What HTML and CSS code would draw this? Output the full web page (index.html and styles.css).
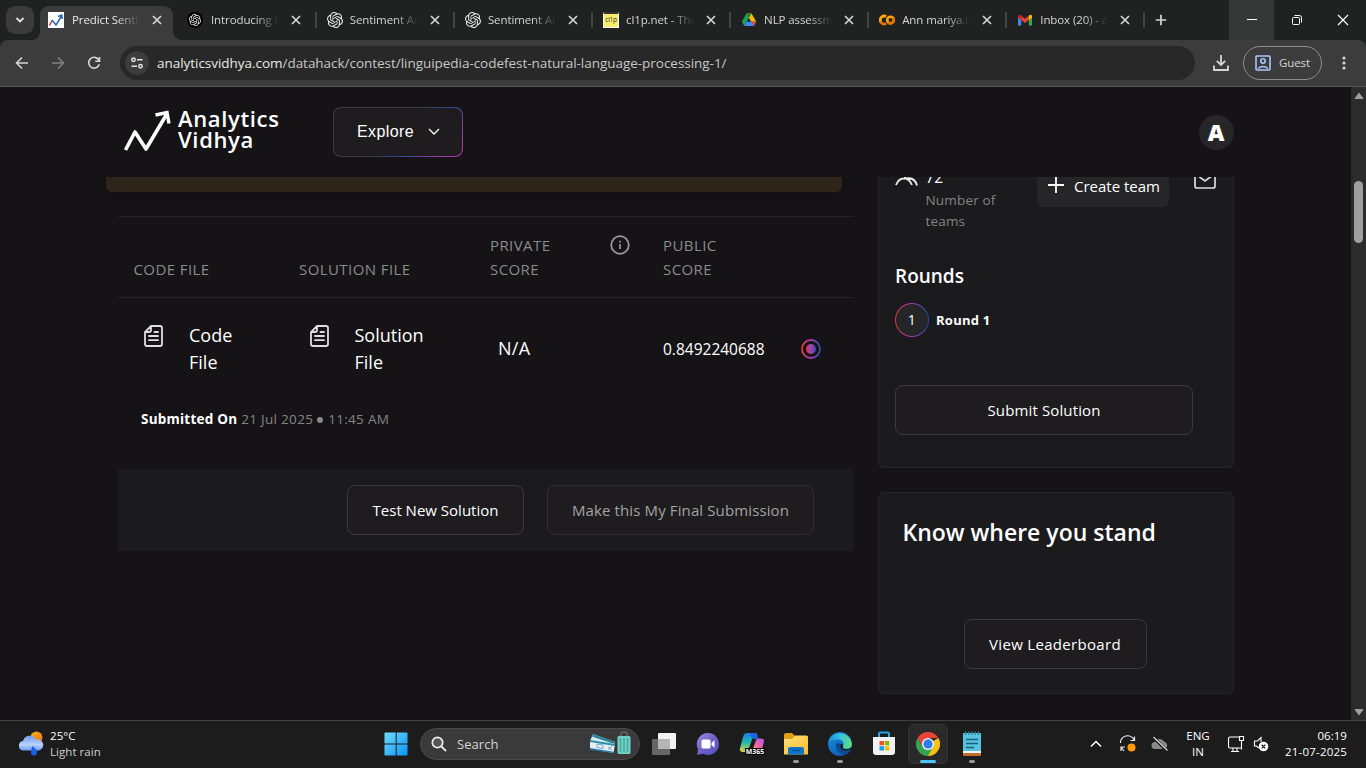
FILE: index.html
```html
<!DOCTYPE html>
<html lang="en">
<head>
<meta charset="utf-8">
<title>Predict Sentiment</title>
<link rel="stylesheet" href="styles.css">
</head>
<body>
<svg class="defs" width="0" height="0">
  <defs>
    <linearGradient id="rb" x1="0" x2="1"><stop offset="0" stop-color="#e23b3b"/><stop offset=".5" stop-color="#a33fb5"/><stop offset="1" stop-color="#2b50a8"/></linearGradient>
    <linearGradient id="win" x1="0" y1="0" x2="1" y2="1"><stop offset="0" stop-color="#6fdcff"/><stop offset="1" stop-color="#0a94f5"/></linearGradient>
    <linearGradient id="cloud" x1="0" y1="0" x2="0" y2="1"><stop offset="0" stop-color="#6f9df0"/><stop offset=".6" stop-color="#b9d2fb"/><stop offset="1" stop-color="#6d9cf2"/></linearGradient>
    <linearGradient id="sun" x1="0" y1="0" x2="1" y2="1"><stop offset="0" stop-color="#fbb615"/><stop offset="1" stop-color="#f26a1b"/></linearGradient>
    <linearGradient id="teams" x1="0" y1="0" x2="1" y2="1"><stop offset="0" stop-color="#a58ae0"/><stop offset=".5" stop-color="#7160c8"/><stop offset="1" stop-color="#4a50c0"/></linearGradient>
    <linearGradient id="cop1" x1="0" y1="0" x2="0" y2="1"><stop offset="0" stop-color="#1b7fe8"/><stop offset=".5" stop-color="#20b8b0"/><stop offset="1" stop-color="#e8d13a"/></linearGradient>
    <linearGradient id="cop2" x1="1" y1="0" x2="0" y2="1"><stop offset="0" stop-color="#a05af0"/><stop offset=".6" stop-color="#f060a8"/><stop offset="1" stop-color="#fba04a"/></linearGradient>
    <linearGradient id="fold" x1="0" y1="0" x2="1" y2="1"><stop offset="0" stop-color="#ffe07a"/><stop offset="1" stop-color="#fbbc2c"/></linearGradient>
    <linearGradient id="edge1" x1="0" y1="0" x2="1" y2="0"><stop offset="0" stop-color="#1c8fd8"/><stop offset=".5" stop-color="#35c1e0"/><stop offset="1" stop-color="#64e070"/></linearGradient>
    <linearGradient id="edge2" x1="0" y1="0" x2="1" y2="1"><stop offset="0" stop-color="#1a8fe0"/><stop offset="1" stop-color="#0b4fa5"/></linearGradient>
    <symbol id="x" viewBox="0 0 12 12"><path d="M2 2l8 8M10 2l-8 8" stroke="#d6d6d6" stroke-width="1.7" fill="none"/></symbol>
    <symbol id="gpt" viewBox="0 0 24 24"><path fill="currentColor" d="M22.28 9.82a5.98 5.98 0 0 0-.52-4.91 6.05 6.05 0 0 0-6.51-2.9A6.07 6.07 0 0 0 4.98 4.18a5.98 5.98 0 0 0-4 2.9 6.05 6.05 0 0 0 .74 7.1 5.98 5.98 0 0 0 .51 4.91 6.05 6.05 0 0 0 6.52 2.9A5.98 5.98 0 0 0 13.26 24a6.06 6.06 0 0 0 5.77-4.21 5.99 5.99 0 0 0 4-2.9 6.06 6.06 0 0 0-.75-7.07zm-9.02 12.61a4.48 4.48 0 0 1-2.88-1.04l.14-.08 4.78-2.76a.8.8 0 0 0 .39-.68v-6.74l2.02 1.17a.07.07 0 0 1 .04.05v5.58a4.5 4.5 0 0 1-4.49 4.5zM3.6 18.3a4.47 4.47 0 0 1-.54-3.01l.14.08 4.78 2.76a.77.77 0 0 0 .78 0l5.85-3.37v2.33a.08.08 0 0 1-.04.06L9.74 19.95a4.5 4.5 0 0 1-6.14-1.65zM2.34 7.9a4.49 4.49 0 0 1 2.37-1.98v5.68a.77.77 0 0 0 .39.68l5.81 3.35-2.02 1.17a.08.08 0 0 1-.07 0L4 14.01A4.5 4.5 0 0 1 2.34 7.9zm16.6 3.86l-5.84-3.4L15.12 7.2a.08.08 0 0 1 .07 0l4.83 2.79a4.49 4.49 0 0 1-.68 8.1v-5.67a.79.79 0 0 0-.4-.66zm2.01-3.03l-.14-.08-4.78-2.78a.78.78 0 0 0-.78 0L9.41 9.24V6.9a.07.07 0 0 1 .03-.06l4.83-2.79a4.5 4.5 0 0 1 6.68 4.66zM8.3 12.86l-2.02-1.17a.08.08 0 0 1-.04-.05V6.07a4.5 4.5 0 0 1 7.38-3.45l-.14.08-4.78 2.76a.8.8 0 0 0-.39.68zm1.1-2.36l2.6-1.5 2.61 1.5v3l-2.6 1.5-2.61-1.5z"/></symbol>
    <symbol id="doc" viewBox="0 0 20 24"><path d="M8 2h9q2 0 2 2v16q0 2-2 2H4q-2 0-2-2V8zM8 2v4q0 2-2 2H2M6 16.200h9M6 12h9M11.500 8H15" fill="none" stroke="#dededf" stroke-width="1.800" stroke-linecap="round"/></symbol>
  </defs>
</svg>

<div class="tabstrip">
  <div class="tab-search"><svg width="12" height="12" viewBox="0 0 12 12"><path d="M2.500 4l3.500 3.500L9.500 4" fill="none" stroke="#e3e3e3" stroke-width="1.800"/></svg></div>
  <div class="tab active">
    <svg class="fav" viewBox="0 0 16 16"><path fill="#fff" d="M0 0h16v16H0z"/><path d="M1.500 13.500l2.700-5" fill="none" stroke="#d0324a" stroke-width="1.500"/><path d="M4 8l4 5 5.500-9M10 4.500l3.800-1.500.4 4" fill="none" stroke="#2464b4" stroke-width="1.500"/></svg>
    <span class="title on">Predict Sentiment</span><svg class="close"><use href="#x"/></svg>
  </div>
  <div class="tab second">
    <span class="fav black"><svg width="12" height="12"><use href="#gpt"/></svg></span>
    <span class="title">Introducing ChatGPT</span><svg class="close"><use href="#x"/></svg>
  </div>
  <div class="tab"><svg class="fav light"><use href="#gpt"/></svg><span class="title">Sentiment Analysis</span><svg class="close"><use href="#x"/></svg></div>
  <div class="tab"><svg class="fav light"><use href="#gpt"/></svg><span class="title">Sentiment Analysis</span><svg class="close"><use href="#x"/></svg></div>
  <div class="tab"><span class="fav clip">cl1p</span><span class="title">cl1p.net - The internet</span><svg class="close"><use href="#x"/></svg></div>
  <div class="tab"><svg class="fav" viewBox="0 0 16 16"><path fill="#1aa05a" d="M5.500 1.500L.8 9.700l2.500 4.200L8 5.800z"/><path fill="#fbbc04" d="M5.500 1.500h5l4.700 8.200h-5z"/><path fill="#4285f4" d="M5.500 9.700h9.700l-2.500 4.200H3.300z"/><path fill="#ea4335" d="M10.600 9.700h4.600l-2.500 4.200z"/><path fill="#188038" d="M5.500 1.500h5L8 5.800z"/></svg><span class="title">NLP assessment</span><svg class="close"><use href="#x"/></svg></div>
  <div class="tab"><svg class="fav" viewBox="0 0 16 16"><g fill="none" stroke-width="2.600"><path stroke="#e8710a" d="M7.300 4.600a4 4 0 1 0 0 6.800"/><path stroke="#f9ab00" d="M6.800 4.200a4 4 0 0 0-5.200 5.200"/><circle cx="11.500" cy="8" r="3.300" stroke="#f9ab00"/><path stroke="#e8710a" d="M9.200 10.400a3.300 3.300 0 0 0 4.600-4.700"/></g></svg><span class="title">Ann mariya.ipynb</span><svg class="close"><use href="#x"/></svg></div>
  <div class="tab"><svg class="fav" viewBox="0 0 16 16"><path fill="#4285f4" d="M1 5v8.500h3.200V7z"/><path fill="#34a853" d="M15 5v8.500h-3.200V7z"/><path fill="#ea4335" d="M4.200 3.800L8 6.700l3.800-2.900v4.300L8 11 4.200 8.100z"/><path fill="#c5221f" d="M1 4.500C1 2.500 3 2.400 4.200 3.500v4.600L1 5.700z"/><path fill="#fbbc04" d="M15 4.500c0-2-2-2.100-3.200-1v4.600L15 5.700z"/></svg><span class="title">Inbox (20) - ann</span><svg class="close"><use href="#x"/></svg></div>
  <svg class="plus" width="12" height="12" viewBox="0 0 12 12"><path d="M6 .8v10.400M.8 6h10.400" stroke="#d6d6d6" stroke-width="1.700"/></svg>
  <div class="winbtns">
    <span class="wb hot"><svg width="12" height="12"><path d="M1 5.500h10" stroke="#fff"/></svg></span>
    <span class="wb"><svg width="12" height="12"><path d="M3.500 1.500h5q2 0 2 2v5" fill="none" stroke="#fff"/><rect x="1.500" y="3.500" width="7" height="7" rx="1" fill="none" stroke="#fff"/></svg></span>
    <span class="wb"><svg width="12" height="12"><path d="M1 1l10 10M11 1L1 11" stroke="#fff" stroke-width="1.200"/></svg></span>
  </div>
</div>

<div class="toolbar">
  <svg class="nav" viewBox="0 0 16 16"><path d="M14 8H3M8 2.500L2.500 8 8 13.500" fill="none" stroke="#d6d6d6" stroke-width="1.600"/></svg>
  <svg class="nav" viewBox="0 0 16 16"><path d="M2 8h11M8 2.500L13.500 8 8 13.500" fill="none" stroke="#828282" stroke-width="1.600"/></svg>
  <svg class="nav" viewBox="0 0 16 16"><path d="M12.800 5A5.400 5.400 0 1 0 13.300 9.200M13.500 2v4.300H9.200" fill="none" stroke="#d6d6d6" stroke-width="1.600"/></svg>
  <div class="omnibox">
    <span class="site"><svg width="14" height="14" viewBox="0 0 14 14" fill="none" stroke="#e3e3e3" stroke-width="1.500"><circle cx="3.500" cy="3.800" r="1.700"/><path d="M7 3.800h5.500M1.500 10.200H7"/><circle cx="10.500" cy="10.200" r="1.700"/></svg></span>
    <span class="url"><b>analyticsvidhya.com</b>/datahack/contest/linguipedia-codefest-natural-language-processing-1/</span>
  </div>
  <svg class="dl" width="18" height="18" viewBox="0 0 18 18"><path d="M9 1v9.500M4.800 6.800L9 11l4.200-4.200M2 11.500V16h14v-4.500" fill="none" stroke="#d6d6d6" stroke-width="1.800"/></svg>
  <div class="guest"><svg width="16" height="16" viewBox="0 0 16 16" fill="none" stroke="#a8c7fa" stroke-width="1.600"><rect x="1" y="1" width="14" height="14" rx="1"/><circle cx="8" cy="6" r="2.200"/><path d="M3 13.500q5-4 10 0"/></svg><span>Guest</span></div>
  <svg class="kebab" width="4" height="16"><g fill="#d6d6d6"><circle cx="2" cy="3" r="1.600"/><circle cx="2" cy="8" r="1.600"/><circle cx="2" cy="13" r="1.600"/></g></svg>
</div>

<div class="viewport">
  <div class="page">
    <header class="site-header">
      <svg class="arrow" width="50" height="44" viewBox="0 0 50 44"><path d="M3.500 40L13 22 24 39 44.500 4.500" fill="none" stroke="#fff" stroke-width="3.600" stroke-linejoin="round"/><path d="M33.500 5L45 2.500 47 13.500" fill="none" stroke="#fff" stroke-width="3.400"/></svg>
      <div class="brand"><div>Analytics</div><div>Vidhya</div></div>
      <div class="explore"><span>Explore</span><svg width="12" height="8" viewBox="0 0 12 8"><path d="M1 1l5 5 5-5" fill="none" stroke="#fff" stroke-width="1.300"/></svg></div>
      <div class="avatar">A</div>
    </header>
    <main class="content">
      <section class="left">
        <div class="banner"></div>
        <div class="table">
          <div class="row head">
            <div>CODE FILE</div>
            <div>SOLUTION FILE</div>
            <div>PRIVATE<br>SCORE</div>
            <div class="info"><svg width="20" height="20" viewBox="0 0 20 20"><circle cx="10" cy="10" r="8.800" fill="none" stroke="#98979a" stroke-width="1.800"/><path d="M10 9v5M10 5.800v1.700" stroke="#98979a" stroke-width="1.700"/></svg></div>
            <div>PUBLIC<br>SCORE</div>
          </div>
          <div class="row files">
            <div class="file"><svg width="20" height="24"><use href="#doc"/></svg><p>Code<br>File</p></div>
            <div class="file"><svg width="20" height="24"><use href="#doc"/></svg><p>Solution<br>File</p></div>
            <div class="na">N/A</div>
            <div class="score">0.8492240688</div>
            <div class="radio"><svg width="20" height="20"><circle cx="10" cy="10" r="9" fill="none" stroke="url(#rb)" stroke-width="1.800"/><circle cx="10" cy="10" r="5" fill="url(#rb)"/></svg></div>
          </div>
          <div class="submitted"><b>Submitted On</b><span>21 Jul 2025</span><i></i><span>11:45 AM</span></div>
        </div>
        <div class="actions">
          <div class="btn test">Test New Solution</div>
          <div class="btn final">Make this My Final Submission</div>
        </div>
      </section>
      <aside class="side">
        <div class="card first">
          <div class="teamline">
            <svg class="people" width="25" height="18" viewBox="0 0 25 18" fill="none" stroke="#eee" stroke-width="1.800"><path d="M2 17Q4.500 10.500 10 10.500T18 17M13 10.500Q20.500 9 23 17.500M10 9.500q4 1 6 3"/><circle cx="9" cy="4" r="3.500"/><path d="M14 1a3.500 3.500 0 0 1 0 7"/></svg>
            <div class="count"><p class="num">72</p><p class="lab">Number of<br>teams</p></div>
            <div class="create"><svg width="18" height="18"><path d="M9 1v16M1 9h16" stroke="#fff" stroke-width="1.800"/></svg><span>Create team</span></div>
            <svg class="mail" width="24" height="20" viewBox="0 0 24 20"><rect x="2" y="1" width="20" height="17" rx="2" fill="none" stroke="#dedede" stroke-width="1.700"/><path d="M6 6.500l6 4.500 6-4.500" fill="none" stroke="#dedede" stroke-width="1.600"/></svg>
          </div>
          <h3>Rounds</h3>
          <div class="round"><div class="ball">1</div><b>Round 1</b></div>
          <div class="btn submit">Submit Solution</div>
        </div>
        <div class="card second-card">
          <h2>Know where you stand</h2>
          <div class="foot"><div class="btn view">View Leaderboard</div></div>
        </div>
      </aside>
    </main>
  </div>
  <div class="scroll"><svg width="10" height="8"><path d="M5 .5L9.500 6.500Q9 7 8 7H2Q1 7 .5 6.500z" fill="#9f9f9f"/></svg><div class="thumb"></div><svg class="down" width="10" height="8"><path d="M5 7.500L.5 1.500Q1 1 2 1h6q1 0 1.500.5z" fill="#9f9f9f"/></svg></div>
</div>

<footer class="taskbar">
  <div class="weather">
    <svg width="26" height="26" viewBox="0 0 26 26"><circle cx="18.500" cy="6.500" r="6" fill="url(#sun)"/><path d="M5 19.500a4.800 4.800 0 0 1 0-9.500 7 7 0 0 1 13-1.500 5.500 5.500 0 0 1 3 11z" fill="url(#cloud)"/><path d="M14 15q5 3 5 6.500a3 3 0 0 1-6 0z" fill="#1c5fe0"/></svg>
    <div class="wtext"><span class="hi">25°C</span><br>Light rain</div>
  </div>
  <div class="apps">
    <svg class="start" width="24" height="24" viewBox="0 0 24 24"><path fill="url(#win)" d="M1 .5h10.700v11H.5V1zM12.700.5H23l.5.500v10.500H12.700zM.5 12.500h11.200v11H1l-.5-.5zM12.700 12.500h10.800V23l-.5.5H12.700z"/></svg>
    <div class="search"><svg width="16" height="16" viewBox="0 0 16 16"><circle cx="6.500" cy="6.500" r="5.200" fill="#555" stroke="#eee" stroke-width="1.700"/><path d="M10.300 10.300l4.700 4.700" stroke="#eee" stroke-width="1.800"/></svg><span>Search</span>
      <svg class="travel" width="44" height="26" viewBox="0 0 44 26"><path d="M4 3l22 8-2 7L1 10z" fill="#d5e9ef"/><path d="M4 3l22 8-.7 2L3 5.500z" fill="#26849c"/><path d="M1 9l25 4-1.500 9L1 18z" fill="#e9eef4"/><path d="M1 9l25 4-.3 2L1 11z" fill="#2b8fa6"/><path d="M1 17l23.800 3.700-.3 1.600L1 18.500z" fill="#267cb0"/><path d="M8 13v3.500l6 1v-3.500zM19 16l4 3M23 15.500l-4 3" stroke="#6aaac8" fill="none"/><path d="M32 5V2.500q0-1.500 3-1.500t3 1.500V5" fill="none" stroke="#5a6d78" stroke-width="1.500"/><rect x="28.500" y="5" width="13" height="18" rx="1.500" fill="#72cfc4"/><path d="M31.500 7v14M35 7v14M38.500 7v14" stroke="#3ba398" stroke-width="1.200"/></svg>
    </div>
    <div class="app"><svg width="24" height="24" viewBox="0 0 24 24"><rect x="6" y="1" width="18" height="16" rx="1" fill="#f2f2f2"/><rect y="7" width="18" height="16" rx="1" fill="#666"/><path d="M6 7h12v10H6z" fill="#b5b5b5"/></svg></div>
    <div class="app"><svg width="24" height="24" viewBox="0 0 24 24"><path d="M12 1a11 11 0 1 1-5 20.800L1 23l1-6A11 11 0 0 1 12 1z" fill="url(#teams)"/><rect x="5.500" y="7.500" width="9" height="9" rx="1.500" fill="#fff"/><path d="M15.500 11l3-2.800v7.600l-3-2.800z" fill="#fff"/></svg></div>
    <div class="app"><svg width="26" height="26" viewBox="0 0 26 26"><path d="M8 2h8q2 0 2.500 3l-3 1q-2 0-3 4l-3 8q-1 3-4 3H4q-4 0-3-4L4 6q1-4 4-4z" fill="url(#cop1)"/><path d="M8 2h8q2 0 2.500 3l1 3h-4q-3 0-5-6z" fill="#1a65d8"/><path d="M15 15l2-6q.8-1.500 3-1.500h2q4 0 2.800 4L23 18h-9z" fill="url(#cop2)"/><path d="M6 17h20v7H6z" fill="#050505"/><text x="6.700" y="23.300" class="m365" textLength="18.500" lengthAdjust="spacingAndGlyphs">M365</text></svg></div>
    <div class="app run"><svg width="26" height="24" viewBox="0 0 26 24"><path d="M1 3q0-2 2-2h6l3 3v4H1z" fill="#e0a010"/><path d="M1 7h8l3-3.500h11.500Q25 3.500 25 5v17.500H1z" fill="url(#fold)"/><path d="M5 22.500V17q0-2 2-2h12q2 0 2 2v5.500z" fill="#1274c8"/><path d="M9 18.500h8" stroke="#064f98" stroke-width="1.400"/></svg></div>
    <div class="app run"><svg width="26" height="26" viewBox="0 0 26 26"><circle cx="13" cy="13" r="12" fill="url(#edge2)"/><path d="M1.500 11A12 12 0 0 1 25 13q0 5-6 5-4 0-3-2.500 2-6-4-7-6-.5-10.500 2.500z" fill="url(#edge1)"/><path d="M9 13q-1 8 8 11 4-1 6.500-5-6 2.500-9.500-1-2-2.500-.5-5-3-2-4.500 0z" fill="#0b4a94"/><path d="M13.500 13q-1.500 4.500 3 6.500 4 1 7.500-1.500l1-2q-2 2-6 2-4 0-3-2.500.5-3-2.500-2.500z" fill="#1c1c1c"/></svg></div>
    <div class="app"><svg width="24" height="26" viewBox="0 0 24 26"><path d="M7 6V3q0-1.500 1.500-1.500h7Q17 1.500 17 3v3" fill="none" stroke="#27a6e8" stroke-width="2"/><path d="M1 6h22v15q0 3-3 3H4q-3 0-3-3z" fill="#f1f1f1"/><path fill="#f25022" d="M7.500 10H12v4.300H7.500z"/><path fill="#7fba00" d="M12.800 10h4.400v4.300h-4.400z"/><path fill="#00a4ef" d="M7.500 15.200H12v4.300H7.500z"/><path fill="#ffb900" d="M12.800 15.200h4.400v4.300h-4.400z"/></svg></div>
    <div class="app run chrome"><svg width="24" height="24" viewBox="0 0 24 24"><path d="M12 12L22.400 6A12 12 0 0 1 12 24z" fill="#fbc116"/><path d="M12 6h10.400A12 12 0 0 0 1.600 6l5.200 9z" fill="#e94335"/><path d="M17.200 15L12 24A12 12 0 0 1 1.600 6l5.200 9z" fill="#34a353"/><circle cx="12" cy="12" r="6" fill="#fff"/><circle cx="12" cy="12" r="4.700" fill="#2f7cf0"/></svg></div>
    <div class="app run"><svg width="20" height="26" viewBox="0 0 20 26"><path d="M1 2h18v19H1z" fill="#58c3dd"/><path d="M1 20h18v2.500H1z" fill="#f5f5f5"/><path d="M1 22.200h18V25H1z" fill="#c56a25"/><path d="M4 8.500h12M4 12.500h12M4 16.500h8" stroke="#16627f" stroke-width="1.500"/><path d="M3.500.5V4M6.800.5V4M10 .5V4M13.200.5V4M16.500.5V4" stroke="#2b88a5" stroke-width="1.300"/></svg></div>
  </div>
  <div class="tray">
    <svg class="chev" width="12" height="8" viewBox="0 0 12 8"><path d="M1 6.500l5-5 5 5" fill="none" stroke="#fff" stroke-width="1.500"/></svg>
    <svg width="18" height="18" viewBox="0 0 18 18" fill="none" stroke="#e8e8e8" stroke-width="1.200"><path d="M1.500 8A7 6.500 0 0 1 15 5M15.500 1.500v4h-4M2 16v-4h4M2.500 12.500L5 16"/><circle cx="12.500" cy="12.500" r="4" fill="#ff9a0a" stroke="none"/></svg>
    <svg width="18" height="16" viewBox="0 0 18 16"><path d="M4 13a3.500 3.500 0 0 1 0-7 5 5 0 0 1 9-.5A4 4 0 0 1 14 13z" fill="#8a8a8a"/><path d="M2 1l14 14" stroke="#1c1c1c" stroke-width="3"/><path d="M2.500 1l14 13.500" stroke="#ddd" stroke-width="1.100"/></svg>
    <div class="lang">ENG<br>IN</div>
    <svg class="net" width="18" height="18" viewBox="0 0 18 18" fill="none" stroke="#fff" stroke-width="1.100"><path d="M12 2H3Q1.500 2 1.500 3.500v8Q1.500 13 3 13h11.500V8M4 16.500h8M6 13v3.500M10 13v3.500M12.500 1.500h4v4h-4zM14.500 5.500v9"/></svg>
    <svg width="16" height="16" viewBox="0 0 16 16" fill="none" stroke="#fff" stroke-width="1.100"><path d="M8 6V1.500L4.500 5H1.500v5h2l2 2"/><circle cx="10.500" cy="10.500" r="4.800" fill="#fff" stroke="none"/><path d="M8.700 8.700l3.600 3.600M12.300 8.700l-3.600 3.600" stroke="#111"/></svg>
    <div class="clock">06:19<br><span>21-07-2025</span></div>
  </div>
</footer>
</body>
</html>
```

FILE: styles.css
```css
* { box-sizing: border-box; }
body { margin: 0; width: 1366px; height: 768px; overflow: hidden; display: flex; flex-direction: column; background: #202221; color: #fff; font-family: "Open Sans", "Noto Sans", sans-serif; }
p, h2, h3 { margin: 0; }
svg { flex: none; display: block; }
.defs { position: absolute; }

/* Browser tabs */
.tabstrip { height: 40px; flex: none; display: flex; align-items: center; background: #202221; }
.tab-search { width: 28px; height: 28px; margin: 0 6px; border-radius: 9px; background: #3a3b3a; display: flex; align-items: center; justify-content: center; }
.tab { width: 138.100px; height: 40px; flex: none; display: flex; align-items: center; padding-left: 11px; position: relative; }
.tab::after { content: ""; width: 2px; height: 16px; background: #414342; position: absolute; right: -1px; top: 12px; }
.tab.active { width: 133px; height: 34px; align-self: flex-end; padding: 0 0 6px 8px; background: #3c3c3c; border-radius: 9px 9px 0 0; }
.tab.active::before, .tab.active::after { content: ""; position: absolute; top: auto; bottom: 0; width: 8px; height: 8px; }
.tab.active::before { left: -8px; background: radial-gradient(circle at 0 0, transparent 7.500px, #3c3c3c 8px); }
.tab.active::after { right: -8px; background: radial-gradient(circle at 100% 0, transparent 7.500px, #3c3c3c 8px); }
.tab.second { width: 142.800px; padding-left: 14px; }
.fav { width: 16px; height: 16px; flex: none; margin-right: 7px; color: #ececec; }
.active .fav, .second .fav { margin-right: 8px; }
.fav.black { background: #000; border-radius: 50%; padding: 2px; }
.fav.clip { background: #f6ec6c; border: 1px solid #f8f8f0; border-top: 2px solid #333; color: #333; font-size: 6.500px; line-height: 12px; letter-spacing: -.3px; text-align: center; }
.title { width: 68px; font-size: 11.500px; letter-spacing: -.1px; line-height: 18px; color: #d5d5d5; white-space: nowrap; overflow: hidden; -webkit-mask-image: linear-gradient(90deg, #000 65%, transparent); mask-image: linear-gradient(90deg, #000 65%, transparent); }
.title.on { color: #e8e8e8; }
.close { width: 12px; height: 12px; margin-left: 11px; }
.plus { margin-left: 11px; }
.winbtns { margin-left: auto; display: flex; }
.wb { width: 46px; height: 40px; display: flex; align-items: center; justify-content: center; }
.wb.hot { width: 45px; background: #363837; }

/* Browser toolbar */
.toolbar { height: 47px; flex: none; display: flex; align-items: center; background: #3c3c3c; border-bottom: 1px solid #56565a; border-radius: 8px 8px 0 0; padding-left: 14px; }
.nav { width: 16px; height: 16px; margin-right: 20px; }
.omnibox { width: 1075px; height: 34px; margin-left: -2px; border-radius: 17px; background: #282828; display: flex; align-items: center; padding-left: 5px; }
.site { width: 24px; height: 24px; border-radius: 50%; background: #3c3c3c; display: flex; align-items: center; justify-content: center; margin-right: 8px; }
.url { font-size: 13.500px; letter-spacing: -.035px; color: #c7c7c7; white-space: nowrap; }
.url b { color: #e8e8e8; font-weight: 400; }
.dl { margin-left: 17px; }
.guest { width: 79px; height: 34px; margin-left: 13px; border: 1px solid #8e8e8e; border-radius: 17px; display: flex; align-items: center; padding: 0 0 1px 11px; font-size: 11.500px; letter-spacing: -.1px; color: #d6d6d6; gap: 8px; }
.kebab { margin-left: 20px; }

/* Site header */
.viewport { flex: 1; min-height: 0; display: flex; background: #151316; }
.page { width: 1351px; display: flex; flex-direction: column; }
.site-header { height: 90px; flex: none; display: flex; align-items: center; padding-left: 122px; }
.arrow { margin-right: 6px; }
.brand { font-size: 22px; font-weight: 600; line-height: 21px; letter-spacing: .65px; width: 155px; padding-bottom: 6px; }
.explore { width: 130px; height: 50px; border-radius: 8px; border: 1px solid transparent; background: linear-gradient(#1e1c1f, #1e1c1f) padding-box, linear-gradient(135deg, #3a3a3e 50%, #2d4a9e 65%, #b036a8 92%) border-box; display: flex; align-items: center; padding-left: 23px; gap: 14px; font: 16px "Liberation Sans", sans-serif; letter-spacing: .4px; }
.avatar { margin-left: auto; margin-right: 117px; width: 35px; height: 35px; border-radius: 50%; background: #262528; font-weight: 800; font-size: 23px; line-height: 35px; text-align: center; padding-right: 1px; }

/* Submissions */
.content { flex: 1; min-height: 0; overflow: hidden; display: flex; align-items: flex-start; gap: 24px; padding-left: 106px; }
.left { width: 748px; }
.banner { width: 736px; height: 15px; background: #2d2519; border-radius: 0 0 6px 6px; box-shadow: 0 8px 14px rgba(0,0,0,.12); }
.table { margin: 24px 0 0 12px; border-top: 1px solid #232429; height: 253px; }
.row { display: grid; }
.head { grid-template-columns: 165.500px 191px 120px 53px 1fr; height: 81px; padding: 0 0 16px 15.500px; align-items: end; font-size: 15px; letter-spacing: .42px; line-height: 24px; color: #8b8a8c; border-bottom: 1px solid #232429; }
.info { align-self: start; padding-top: 18px; }
.files { grid-template-columns: 165.500px 189.500px 165px 138px 1fr; height: 102px; padding: 24px 0 0 25px; font-size: 18px; line-height: 27px; }
.file { display: flex; align-items: flex-start; gap: 26px; }
.file svg { margin-top: 2px; }
.na { padding-top: 13px; letter-spacing: .3px; }
.score { padding-top: 14px; font-size: 15.500px; }
.radio { padding-top: 17px; }
.submitted { padding: 8px 0 0 23px; font-size: 13.500px; letter-spacing: .3px; line-height: 22px; color: #858486; display: flex; align-items: center; }
.submitted b { color: #fff; letter-spacing: .22px; margin-right: 4px; }
.submitted i { width: 6px; height: 6px; border-radius: 50%; background: #8a898b; margin: 2px 5px 0 4px; }
.actions { margin-left: 12px; height: 82px; background: #1b1a1d; padding: 16px 0 0 229px; display: flex; gap: 23px; }
.btn { height: 50px; border: 1px solid #3a393d; border-radius: 8px; background: #1e1c1f; font-size: 15px; display: flex; align-items: center; justify-content: center; white-space: nowrap; }
.test { width: 177px; }
.final { width: 267px; color: #a3a2a4; border-color: #2f2e32; letter-spacing: .12px; }

/* Sidebar */
.side { width: 356px; }
.card { background: #1b1a1d; border: 1px solid #252629; border-radius: 6px; }
.first { height: 291px; border-top: 0; border-radius: 0 0 6px 6px; padding: 0 40px 0 16px; }
.teamline { height: 84px; display: flex; margin-right: -40px; }
.people { margin: -9px 0 0 -1px; }
.count { margin: -12px 0 0 6.500px; width: 111.500px; font-size: 15.500px; line-height: 25px; }
.lab { font-size: 13.500px; letter-spacing: .18px; line-height: 21px; color: #858486; }
.create { width: 132px; height: 30px; border-radius: 0 0 6px 6px; background: #262528; display: flex; align-items: center; gap: 9px; padding: 0 0 15px 10px; font-size: 15px; white-space: nowrap; }
.create span { padding-top: 3px; }
.mail { margin: -7px 0 0 24px; }
h3 { font-size: 19px; line-height: 30px; font-weight: 600; }
.round { display: flex; align-items: center; gap: 7px; margin-top: 12px; font-size: 13px; letter-spacing: .25px; }
.ball { width: 34px; height: 34px; border-radius: 50%; border: 1px solid transparent; background: linear-gradient(#262528, #262528) padding-box, linear-gradient(90deg, #e2363a, #a03fb5 50%, #1c4aa5) border-box; font-size: 14px; line-height: 32px; text-align: center; }
.submit { margin-top: 48px; letter-spacing: .13px; }
.second-card { margin-top: 24px; height: 202px; }
h2 { height: 102px; padding: 21px 0 0 23.500px; font-size: 23px; line-height: 36px; font-weight: 600; border-bottom: 1px solid #171619; }
.foot { display: flex; justify-content: center; padding: 24px 2px 0 0; }
.view { width: 183px; letter-spacing: .32px; }

.scroll { width: 15px; background: #2c2c2c; display: flex; flex-direction: column; align-items: center; padding: 5px 0 4px; }
.thumb { width: 9px; height: 62px; margin-top: 81px; border-radius: 5px; background: #9f9f9f; }
.down { margin-top: auto; }

/* Taskbar */
.taskbar { height: 48px; flex: none; border-top: 1px solid #414043; background: #1c1c1c; display: flex; align-items: center; padding-bottom: 1px; font-size: 11.500px; letter-spacing: .05px; line-height: 16px; }
.weather { width: 383.500px; display: flex; align-items: center; gap: 6px; padding: 0 0 1px 18px; color: #cfcfcf; }
.hi { color: #fff; }
.apps { display: flex; align-items: center; height: 46px; }
.start { margin-right: 12.500px; }
.search { width: 220px; height: 32px; border-radius: 16px; background: #3a3a3a; border: 1px solid #4a4a4a; display: flex; align-items: center; gap: 10px; padding-left: 10px; font-size: 13px; color: #d4d4d4; margin-right: 4px; }
.travel { margin-left: auto; margin-right: 6px; }
.app { width: 40px; height: 40px; margin-right: 4px; display: flex; align-items: center; justify-content: center; position: relative; }
.app.run::after { content: ""; position: absolute; left: 17px; bottom: 1px; width: 6px; height: 3px; border-radius: 2px; background: #999; }
.app.chrome { background: #2a2a2a; border: 1px solid #333; border-radius: 5px; }
.app.chrome::after { left: 11px; width: 16px; bottom: 0; background: #4cc2ff; }
.m365 { font: bold 7px "Open Sans", sans-serif; fill: #fff; }
.tray { margin-left: auto; margin-right: 18px; display: flex; align-items: center; gap: 14px; color: #fff; }
.chev { margin-right: 3px; }
.net { margin-right: -6px; }
.lang { width: 30px; text-align: center; padding-bottom: 1px; }
.clock { width: 65px; text-align: right; padding: 0 1px 1px 0; }
.clock span { letter-spacing: .2px; }
```
